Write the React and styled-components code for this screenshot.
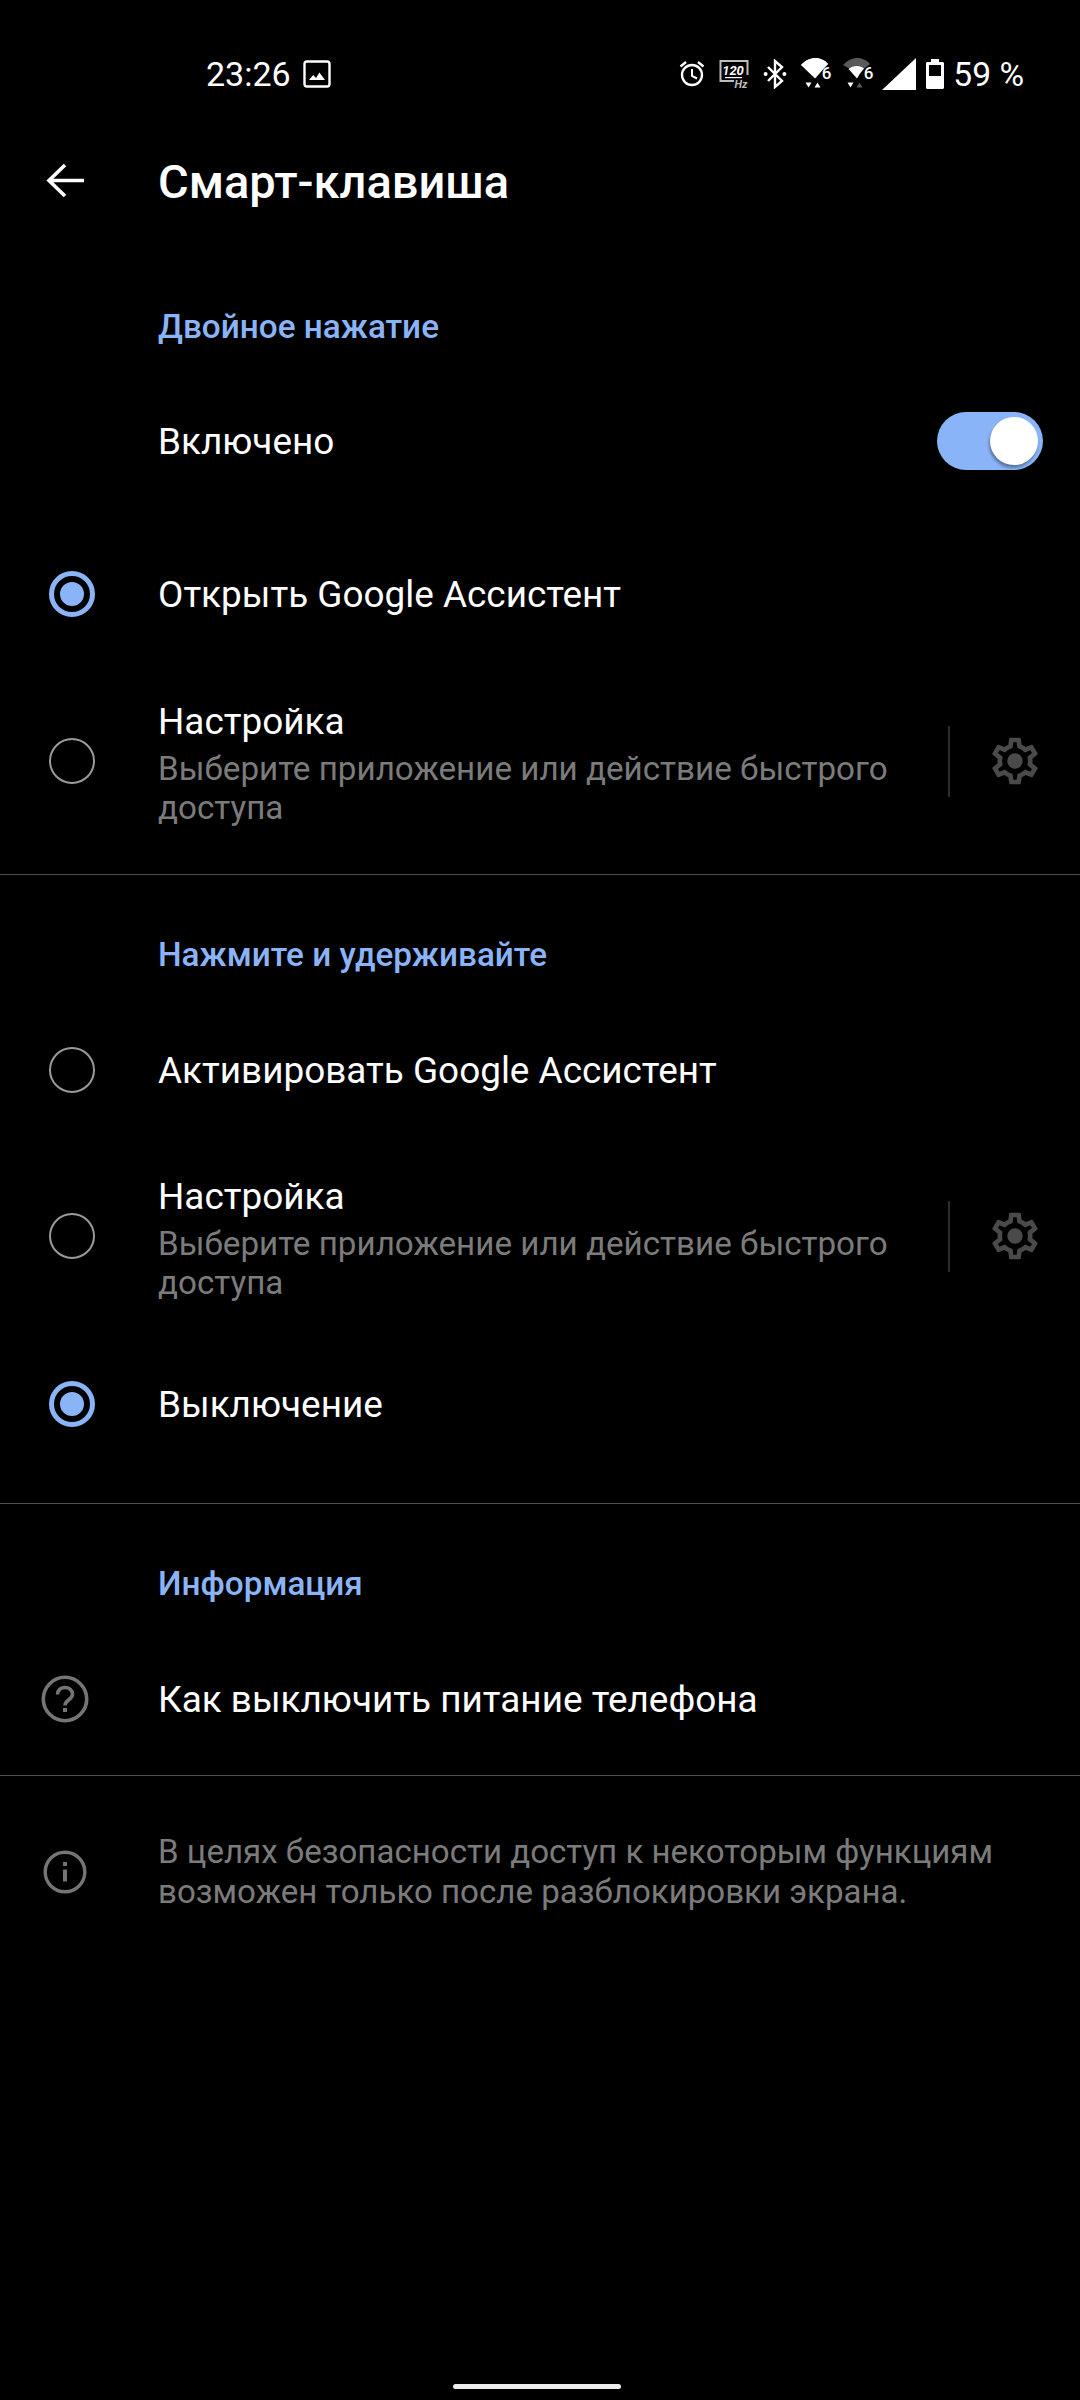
import React from "react";
import styled, { createGlobalStyle } from "styled-components";

const Global = createGlobalStyle`
  html, body { margin: 0; padding: 0; background: #000; }
  * { box-sizing: border-box; }
`;

const Page = styled.div`
  width: 1080px;
  min-height: 2400px;
  background: #000;
  color: #fff;
  font-family: Roboto, "Noto Sans", sans-serif;
  display: flex;
  flex-direction: column;
`;

const StatusBar = styled.div`
  height: 148px;
  display: flex;
  align-items: center;
  padding: 0 56px 0 206px;
  font-size: 34px;
`;
const Time = styled.span`
  margin-right: 12px;
`;
const StatusIcons = styled.div`
  margin-left: auto;
  display: flex;
  align-items: center;
`;
const Percent = styled.span`
  font-size: 33.6px;
`;
const Slot = styled.span`
  display: flex;
  margin-right: ${(p) => p.$gap}px;
`;

const TopBar = styled.div`
  height: 70px;
  display: flex;
  align-items: center;
  padding-left: 46px;
`;
const Title = styled.h1`
  margin: 0 0 3px 72px;
  font-size: 47px;
  font-weight: 500;
`;

const Group = styled.section`
  padding-top: ${(p) => p.$top}px;
  padding-bottom: ${(p) => p.$bottom}px;
  border-bottom: ${(p) => (p.$line ? "1px solid #505050" : "none")};
`;
const SectionTitle = styled.h2`
  margin: 0;
  height: 80px;
  padding-left: 158px;
  display: flex;
  align-items: center;
  font-size: 33.3px;
  font-weight: 500;
  color: #8ab4f8;
`;
const Row = styled.div`
  height: ${(p) => p.$h}px;
  display: flex;
  align-items: center;
`;
const Lead = styled.div`
  width: 158px;
  flex: none;
  display: flex;
  padding-left: ${(p) => p.$pad || 0}px;
`;
const RadioRing = styled.span`
  width: 46px;
  height: 46px;
  border-radius: 50%;
  border: ${(p) => (p.$on ? "5px solid #8ab4f8" : "2px solid #9a9a9a")};
  display: flex;
  align-items: center;
  justify-content: center;
`;
const RadioDot = styled.span`
  width: 24px;
  height: 24px;
  border-radius: 50%;
  background: #8ab4f8;
`;
const Label = styled.div`
  font-size: 36.9px;
  line-height: 46px;
  position: relative;
  top: 1px;
`;
const Body = styled.div`
  flex: 1;
  min-width: 0;
  padding-top: 2px;
`;
const Sub = styled.div`
  font-size: 33.2px;
  line-height: 39px;
  color: #7b7b7b;
  margin-top: 5px;
`;
const Side = styled.div`
  width: 132px;
  height: 71px;
  flex: none;
  display: flex;
  align-items: center;
  justify-content: flex-end;
  padding-right: 37px;
  border-left: 2px solid #2c2c2c;
`;
const Track = styled.span`
  margin-left: auto;
  margin-right: 37px;
  width: 106px;
  height: 58px;
  border-radius: 29px;
  background: #8ab4f8;
  display: flex;
  align-items: center;
  justify-content: flex-end;
  padding-right: 5px;
`;
const Knob = styled.span`
  width: 48px;
  height: 48px;
  border-radius: 50%;
  background: #fff;
  box-shadow: -1px 3px 3px rgba(0, 0, 0, 0.35);
`;
const Note = styled.div`
  display: flex;
  align-items: center;
  padding-top: 56px;
`;
const NoteText = styled.div`
  font-size: 33.1px;
  line-height: 39.5px;
  color: #7b7b7b;
`;
const HomeBar = styled.div`
  margin: auto 0 11px 453px;
  width: 168px;
  height: 5px;
  border-radius: 3px;
  background: #ececec;
`;

const Back = () => (
  <svg width="40" height="40" viewBox="0 0 40 40" fill="none" stroke="#fff" strokeWidth="3.600">
    <path d="M38 17.500H4M19 2L3 17.500L19 33" />
  </svg>
);
const Gear = () => (
  <svg width="56" height="56" viewBox="0 0 24 24" fill="none">
    <path
      fill="#4a4a4a"
      d="M19.43 12.98c.04-.32.07-.64.07-.98s-.03-.66-.07-.98l2.11-1.65c.19-.15.24-.42.12-.64l-2-3.46a.5.5 0 0 0-.61-.22l-2.49 1c-.52-.4-1.08-.73-1.69-.98l-.38-2.65A.49.49 0 0 0 14 2h-4c-.25 0-.46.18-.49.42l-.38 2.65c-.61.25-1.17.59-1.69.98l-2.49-1a.5.5 0 0 0-.61.22l-2 3.46c-.13.22-.07.49.12.64l2.11 1.65c-.04.32-.07.65-.07.98s.03.66.07.98l-2.11 1.65c-.19.15-.24.42-.12.64l2 3.46c.12.22.39.3.61.22l2.49-1c.52.4 1.08.73 1.69.98l.38 2.65c.03.24.24.42.49.42h4c.25 0 .46-.18.49-.42l.38-2.65c.61-.25 1.17-.59 1.69-.98l2.49 1c.23.09.49 0 .61-.22l2-3.46c.12-.22.07-.49-.12-.64l-2.11-1.65zM17.45 11.27c.04.31.05.52.05.73s-.02.43-.05.73l-.14 1.13.89.7 1.08.84-.7 1.21-1.27-.51-1.04-.42-.9.68c-.43.32-.84.56-1.25.73l-1.06.43-.16 1.13-.2 1.35h-1.4l-.19-1.35-.16-1.13-1.06-.43c-.43-.18-.83-.41-1.23-.71l-.91-.7-1.06.43-1.27.51-.7-1.21 1.08-.84.89-.7-.14-1.13c-.03-.31-.05-.54-.05-.74s.02-.43.05-.73l.14-1.13-.89-.7-1.08-.84.7-1.21 1.27.51 1.04.42.9-.68c.43-.32.84-.56 1.25-.73l1.06-.43.16-1.13.2-1.35h1.39l.19 1.35.16 1.13 1.06.43c.43.18.83.41 1.23.71l.91.7 1.06-.43 1.27-.51.7 1.21-1.07.85-.89.7.14 1.13z"
    />
    <circle cx="12" cy="12" r="3.300" fill="#4a4a4a" />
  </svg>
);
const Help = () => (
  <svg width="48" height="48" viewBox="0 0 48 48" fill="none" stroke="#757575">
    <circle cx="24" cy="24" r="21.700" strokeWidth="3.600" />
    <path d="M16.500 19.500c0-4.200 3.300-7 7.500-7s7.500 2.800 7.500 6.700c0 5.300-7.500 5.800-7.500 11.300" strokeWidth="3.600" />
    <rect x="22" y="33" width="4" height="4" fill="#757575" stroke="none" />
  </svg>
);
const Info = () => (
  <svg width="44" height="44" viewBox="0 0 44 44" fill="none" stroke="#757575">
    <circle cx="22" cy="22" r="19.800" strokeWidth="3.400" />
    <rect x="20" y="19.500" width="4" height="12" fill="#757575" stroke="none" />
    <rect x="20" y="12" width="4" height="4" fill="#757575" stroke="none" />
  </svg>
);

const GalleryIcon = () => (
  <svg width="28" height="28" viewBox="0 0 28 28" fill="none">
    <rect x="1.500" y="1.500" width="25" height="25" rx="2.500" stroke="#fff" strokeWidth="2.400" />
    <path fill="#fff" d="M6 20l4.200-5 2.800 3 3.400-5.400L22 20z" />
  </svg>
);
const Alarm = () => (
  <svg width="26" height="28" viewBox="0 0 26 28" fill="none" stroke="#fff" strokeWidth="2.300">
    <circle cx="13" cy="15" r="10" />
    <path d="M13 9v7l5 2.500" strokeWidth="2" />
    <path d="M1.500 6.500L7 2M24.500 6.500L19 2" />
  </svg>
);
const Hz = () => (
  <svg width="32" height="30" viewBox="0 0 32 30" fill="none">
    <path d="M16 22H2.500V2H29.500V16" stroke="#bdbdbd" strokeWidth="2" />
    <text x="15" y="15.500" textAnchor="middle" fill="#fff" fontFamily="Roboto, sans-serif" fontSize="13" fontStyle="italic" fontWeight="700">120</text>
    <path d="M7 18.600H24" stroke="#fff" strokeWidth="1.200" />
    <text x="23" y="28.500" textAnchor="middle" fill="#bdbdbd" fontFamily="Roboto, sans-serif" fontSize="11" fontStyle="italic" fontWeight="700">Hz</text>
  </svg>
);
const Bluetooth = () => (
  <svg width="24" height="30" viewBox="0 0 24 30" fill="none">
    <path d="M5 8l14 14-7 6V2l7 6L5 22" stroke="#fff" strokeWidth="2.400" />
    <circle cx="2.600" cy="15" r="2" fill="#fff" />
    <circle cx="21.400" cy="15" r="2" fill="#fff" />
  </svg>
);
const Wifi = ({ dim }) => (
  <svg width="32" height="32" viewBox="0 0 32 32">
    <path fill={dim ? "#5a5a5a" : "#fff"} d="M0 7C4 2.500 10 0 14.500 0S24 2.500 27 6L20 11.500H8z" />
    <path fill="#fff" d={dim ? "M5.500 11C8 9 11 8 14 8s5 1 7 2.500L17 15.500l-3 5z" : "M0 7C4 2.500 10 0 14.500 0S24 2.500 27 6L14 20.500z"} />
    <path fill="#fff" d="M4.500 24.500h6L7.500 29.500z" />
    <path fill={dim ? "#5a5a5a" : "#fff"} d="M13.500 29.500h6l-3-5z" />
    <text x="25.500" y="21" textAnchor="middle" fill="#fff" fontFamily="Roboto, sans-serif" fontSize="17" fontWeight="500">6</text>
  </svg>
);
const Signal = () => (
  <svg width="34" height="32" viewBox="0 0 34 32">
    <path fill="#fff" d="M0 32L34 0V32z" />
  </svg>
);
const Battery = () => (
  <svg width="18" height="30" viewBox="0 0 18 30">
    <path fill="#fff" fillRule="evenodd" d="M5 0h8v3h3.500c.8 0 1.500.7 1.500 1.500V28.500c0 .8-.7 1.500-1.500 1.500H1.500C.7 30 0 29.300 0 28.500V4.500C0 3.700.7 3 1.500 3H5zM3 6v11h12V6z" />
  </svg>
);

const Radio = ({ on }) => (
  <Lead $pad={49}>
    <RadioRing $on={on}>{on && <RadioDot />}</RadioRing>
  </Lead>
);

const SUB = "Выберите приложение или действие быстрого доступа";

const CustomBody = () => (
  <>
    <Body>
      <Label>Настройка</Label>
      <Sub>{SUB}</Sub>
    </Body>
    <Side>
      <Gear />
    </Side>
  </>
);

export default function App() {
  return (
    <Page>
      <Global />
      <StatusBar>
        <Time>23:26</Time>
        <GalleryIcon />
        <StatusIcons>
          <Slot $gap={13}><Alarm /></Slot>
          <Slot $gap={13}><Hz /></Slot>
          <Slot $gap={14}><Bluetooth /></Slot>
          <Slot $gap={10}><Wifi /></Slot>
          <Slot $gap={7}><Wifi dim /></Slot>
          <Slot $gap={10}><Signal /></Slot>
          <Slot $gap={9}><Battery /></Slot>
          <Percent>59 %</Percent>
        </StatusIcons>
      </StatusBar>
      <TopBar>
        <Back />
        <Title>Смарт-клавиша</Title>
      </TopBar>
      <Group $top={68} $bottom={24} $line>
        <SectionTitle>Двойное нажатие</SectionTitle>
        <Row $h={150}>
          <Lead />
          <Label>Включено</Label>
          <Track>
            <Knob />
          </Track>
        </Row>
        <Row $h={156}>
          <Radio on />
          <Label>Открыть Google Ассистент</Label>
        </Row>
        <Row $h={178}>
          <Radio />
          <CustomBody />
        </Row>
      </Group>
      <Group $top={39} $bottom={21} $line>
        <SectionTitle>Нажмите и удерживайте</SectionTitle>
        <Row $h={152}>
          <Radio />
          <Label>Активировать Google Ассистент</Label>
        </Row>
        <Row $h={180}>
          <Radio />
          <CustomBody />
        </Row>
        <Row $h={156}>
          <Radio on />
          <Label>Выключение</Label>
        </Row>
      </Group>
      <Group $top={39} $bottom={0} $line>
        <SectionTitle>Информация</SectionTitle>
        <Row $h={152}>
          <Lead $pad={41}>
            <Help />
          </Lead>
          <Label>Как выключить питание телефона</Label>
        </Row>
      </Group>
      <Note>
        <Lead $pad={43}>
          <Info />
        </Lead>
        <NoteText>
          В целях безопасности доступ к некоторым функциям
          <br />
          возможен только после разблокировки экрана.
        </NoteText>
      </Note>
      <HomeBar />
    </Page>
  );
}
